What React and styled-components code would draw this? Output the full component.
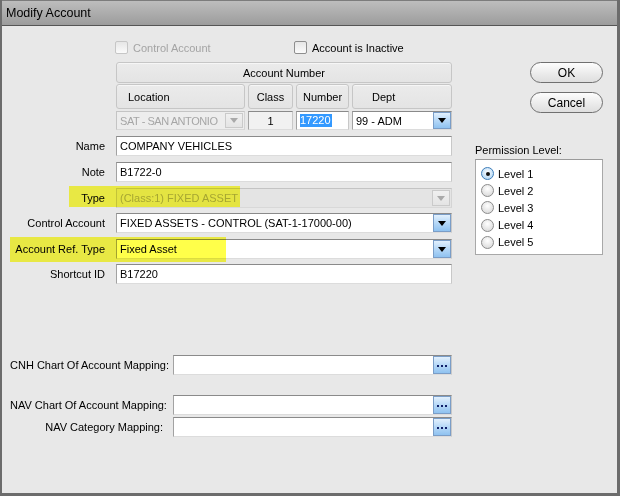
import React from 'react';
import styled, { createGlobalStyle } from 'styled-components';

const GlobalStyle = createGlobalStyle`
  html, body {
    margin: 0;
    padding: 0;
    background: #e8e8e8;
  }
  body {
    font-family: "Liberation Sans", Arial, sans-serif;
    font-size: 11px;
    color: #000;
  }
`;

const Window = styled.div`
  width: 620px;
  height: 496px;
  box-sizing: border-box;
  display: flex;
  flex-direction: column;
  background: #e8e8e8;
  border-left: 2px solid #6c6c6c;
  border-right: 3px solid #6c6c6c;
  border-bottom: 3px solid #6c6c6c;
`;

const TitleBar = styled.div`
  height: 26px;
  box-sizing: border-box;
  display: flex;
  align-items: center;
  padding-left: 4px;
  border-top: 1px solid #7c7c7c;
  border-bottom: 1px solid #555;
  background: linear-gradient(#bdbdbd, #9c9c9c);
  font-size: 12.5px;
  color: #000;
`;

const Body = styled.div`
  flex: 1;
  padding: 14px 0 0 8px;
  display: flex;
  flex-direction: column;
`;

const TopArea = styled.div`
  display: flex;
  align-items: flex-start;
`;

const FormColumn = styled.div`
  width: 442px;
  display: flex;
  flex-direction: column;
`;

const Row = styled.div`
  position: relative;
  display: grid;
  grid-template-columns: 95px 336px;
  column-gap: 11px;
  align-items: center;
  height: ${({ $h }) => $h || 20}px;
  margin-top: ${({ $mt }) => $mt || 0}px;
`;

const Label = styled.div`
  text-align: right;
  white-space: nowrap;
`;

const Cell = styled.div`
  grid-column: 2;
  height: 100%;
`;

const CheckRow = styled.div`
  grid-column: 2;
  display: grid;
  grid-template-columns: 179px auto;
  align-items: center;
`;

const CheckItem = styled.label`
  display: flex;
  align-items: center;
  gap: 5px;
  margin-left: -1px;
  color: ${({ $disabled }) => ($disabled ? '#a4a4a4' : '#000')};
`;

const CheckBox = styled.span`
  width: 13px;
  height: 13px;
  box-sizing: border-box;
  border-radius: 2px;
  border: 1px solid ${({ $disabled }) => ($disabled ? '#c6c6c6' : '#8e8e8e')};
  background: linear-gradient(#e6e6e6, #fbfbfb);
`;

const HeaderCell = styled.div`
  height: 100%;
  box-sizing: border-box;
  display: flex;
  align-items: center;
  justify-content: ${({ $align }) => $align || 'center'};
  padding-left: ${({ $pl }) => $pl || 0}px;
  border: 1px solid #c6c6c6;
  border-radius: 3px;
  background: linear-gradient(#ebebeb, #e4e4e4);
  box-shadow: inset 0 1px 0 #f6f6f6;
`;

const ColumnGrid = styled.div`
  grid-column: 2;
  height: 100%;
  display: grid;
  grid-template-columns: 129px 45px 53px 100px;
  column-gap: 3px;
`;

const Box = styled.div`
  height: 100%;
  box-sizing: border-box;
  display: flex;
  align-items: center;
  justify-content: ${({ $center }) => ($center ? 'center' : 'flex-start')};
  padding-left: ${({ $center }) => ($center ? 0 : 3)}px;
  background: ${({ $bg }) => $bg || '#fff'};
  color: ${({ $disabled }) => ($disabled ? '#a6a6a6' : '#000')};
  border-style: solid;
  border-width: 1px;
  border-color: ${({ $disabled }) =>
    $disabled ? '#c4c4c4 #d4d4d4 #d8d8d8 #c4c4c4' : '#8a8a8a #c8c8c8 #dcdcdc #a2a2a2'};
  white-space: nowrap;
  overflow: hidden;
`;

const BoxText = styled.span`
  flex: 1;
  overflow: hidden;
  letter-spacing: ${({ $tight }) => ($tight ? '-0.45px' : 'normal')};
`;

const Selected = styled.span`
  background: #3399ff;
  color: #fff;
  padding: 0 1px 1px 0;
`;

const SideButton = styled.span`
  width: ${({ $w }) => $w || 18}px;
  align-self: stretch;
  box-sizing: border-box;
  margin: ${({ $disabled }) => ($disabled ? '1px 1px 1px 0' : '0')};
  display: flex;
  align-items: center;
  justify-content: center;
  border: 1px solid ${({ $disabled }) => ($disabled ? '#cacaca' : '#7a9dc7')};
  background: ${({ $disabled }) =>
    $disabled ? 'linear-gradient(#f0f0f0, #e4e4e4)' : 'linear-gradient(#e2f0fd, #b6d8f7 50%, #8fc2f0)'};
`;

const Highlight = styled.span`
  position: absolute;
  top: ${({ $top }) => $top}px;
  left: ${({ $left }) => $left}px;
  width: ${({ $w }) => $w}px;
  height: ${({ $h }) => $h}px;
  background: #ffff4a;
  mix-blend-mode: multiply;
  pointer-events: none;
`;

const SideColumn = styled.div`
  width: 128px;
  margin-left: 23px;
  display: flex;
  flex-direction: column;
`;

const PillButton = styled.button`
  align-self: flex-end;
  width: 73px;
  height: 21px;
  margin-top: ${({ $mt }) => $mt}px;
  padding: 0;
  border: 1px solid #707070;
  border-radius: 11px;
  background: linear-gradient(#fdfdfd, #ededed 50%, #dedede);
  font-family: "Liberation Sans", Arial, sans-serif;
  font-size: 12px;
  color: #000;
`;

const GroupLabel = styled.div`
  margin-top: 31px;
  margin-bottom: 2px;
  line-height: 13px;
`;

const RadioBox = styled.div`
  height: 96px;
  box-sizing: border-box;
  padding: 5px 0 0 5px;
  background: #fff;
  border: 1px solid #a8a8a8;
  border-top-color: #9a9a9a;
`;

const RadioItem = styled.div`
  display: flex;
  align-items: center;
  gap: 4px;
  height: 17.2px;
`;

const RadioCircle = styled.span`
  width: 13px;
  height: 13px;
  box-sizing: border-box;
  border-radius: 50%;
  display: flex;
  align-items: center;
  justify-content: center;
  border: 1px solid ${({ $on }) => ($on ? '#3d7cb8' : '#8c8c8c')};
  background: ${({ $on }) =>
    $on ? 'radial-gradient(circle at 50% 40%, #ffffff, #bcdcf6 70%)' : 'radial-gradient(circle at 50% 35%, #ffffff, #dedede 75%)'};
`;

const Dot = styled.span`
  width: 4px;
  height: 4px;
  border-radius: 50%;
  background: #111;
`;

const MappingRow = styled.div`
  display: grid;
  grid-template-columns: 153px 279px;
  column-gap: 10px;
  align-items: center;
  height: 20px;
  margin-top: ${({ $mt }) => $mt}px;
`;

const Arrow = ({ disabled }) => (
  <svg width="8" height="5" viewBox="0 0 8 5">
    <polygon points="0,0 8,0 4,5" fill={disabled ? '#a9a9a9' : '#000'} />
  </svg>
);

const Dots = () => (
  <svg width="11" height="3" viewBox="0 0 11 3">
    <rect x="0" y="1" width="2" height="2" fill="#10206a" />
    <rect x="4" y="1" width="2" height="2" fill="#10206a" />
    <rect x="8" y="1" width="2" height="2" fill="#10206a" />
  </svg>
);

const Combo = ({ text, disabled, bg, tight }) => (
  <Box $disabled={disabled} $bg={bg}>
    <BoxText $tight={tight}>{text}</BoxText>
    <SideButton $disabled={disabled}>
      <Arrow disabled={disabled} />
    </SideButton>
  </Box>
);

const Lookup = () => (
  <Box>
    <BoxText />
    <SideButton>
      <Dots />
    </SideButton>
  </Box>
);

const fields = [
  { label: 'Name', value: 'COMPANY VEHICLES', mt: 6 },
  { label: 'Note', value: 'B1722-0', mt: 6 },
  { label: 'Type', combo: true, disabled: true, value: '(Class:1) FIXED ASSET', mt: 6, mark: { top: -2, left: 59, w: 171, h: 21 } },
  { label: 'Control Account', combo: true, value: 'FIXED ASSETS - CONTROL (SAT-1-17000-00)', mt: 5 },
  { label: 'Account Ref. Type', combo: true, value: 'Fixed Asset', mt: 6, mark: { top: -2, left: 0, w: 216, h: 25 } },
  { label: 'Shortcut ID', value: 'B17220', mt: 5 },
];

const levels = ['Level 1', 'Level 2', 'Level 3', 'Level 4', 'Level 5'];

export default function App() {
  return (
    <>
      <GlobalStyle />
      <Window>
        <TitleBar>Modify Account</TitleBar>
        <Body>
          <TopArea>
            <FormColumn>
              <Row $h={15}>
                <CheckRow>
                  <CheckItem $disabled>
                    <CheckBox $disabled />
                    Control Account
                  </CheckItem>
                  <CheckItem>
                    <CheckBox />
                    Account is Inactive
                  </CheckItem>
                </CheckRow>
              </Row>
              <Row $h={21} $mt={7}>
                <Cell>
                  <HeaderCell>Account Number</HeaderCell>
                </Cell>
              </Row>
              <Row $h={25} $mt={1}>
                <ColumnGrid>
                  <HeaderCell $align="flex-start" $pl={11}>Location</HeaderCell>
                  <HeaderCell>Class</HeaderCell>
                  <HeaderCell>Number</HeaderCell>
                  <HeaderCell $align="flex-start" $pl={19}>Dept</HeaderCell>
                </ColumnGrid>
              </Row>
              <Row $h={19} $mt={2}>
                <ColumnGrid>
                  <Combo text="SAT - SAN ANTONIO" disabled bg="#ededed" tight />
                  <Box $center $bg="#f1f1f1">1</Box>
                  <Box>
                    <Selected>17220</Selected>
                  </Box>
                  <Combo text="99 - ADM" />
                </ColumnGrid>
              </Row>
              {fields.map((f) => (
                <Row key={f.label} $mt={f.mt}>
                  <Label>{f.label}</Label>
                  <Cell>
                    {f.combo ? (
                      <Combo text={f.value} disabled={f.disabled} bg={f.disabled ? '#e4e4e4' : '#fff'} />
                    ) : (
                      <Box>{f.value}</Box>
                    )}
                  </Cell>
                  {f.mark && <Highlight $top={f.mark.top} $left={f.mark.left} $w={f.mark.w} $h={f.mark.h} />}
                </Row>
              ))}
            </FormColumn>
            <SideColumn>
              <PillButton $mt={22}>OK</PillButton>
              <PillButton $mt={9}>Cancel</PillButton>
              <GroupLabel>Permission Level:</GroupLabel>
              <RadioBox>
                {levels.map((l, i) => (
                  <RadioItem key={l}>
                    <RadioCircle $on={i === 0}>{i === 0 && <Dot />}</RadioCircle>
                    {l}
                  </RadioItem>
                ))}
              </RadioBox>
            </SideColumn>
          </TopArea>
          <MappingRow $mt={71}>
            <Label>CNH Chart Of Account Mapping:</Label>
            <Lookup />
          </MappingRow>
          <MappingRow $mt={20}>
            <Label>NAV Chart Of Account Mapping:</Label>
            <Lookup />
          </MappingRow>
          <MappingRow $mt={2}>
            <Label>NAV Category Mapping:</Label>
            <Lookup />
          </MappingRow>
        </Body>
      </Window>
    </>
  );
}
